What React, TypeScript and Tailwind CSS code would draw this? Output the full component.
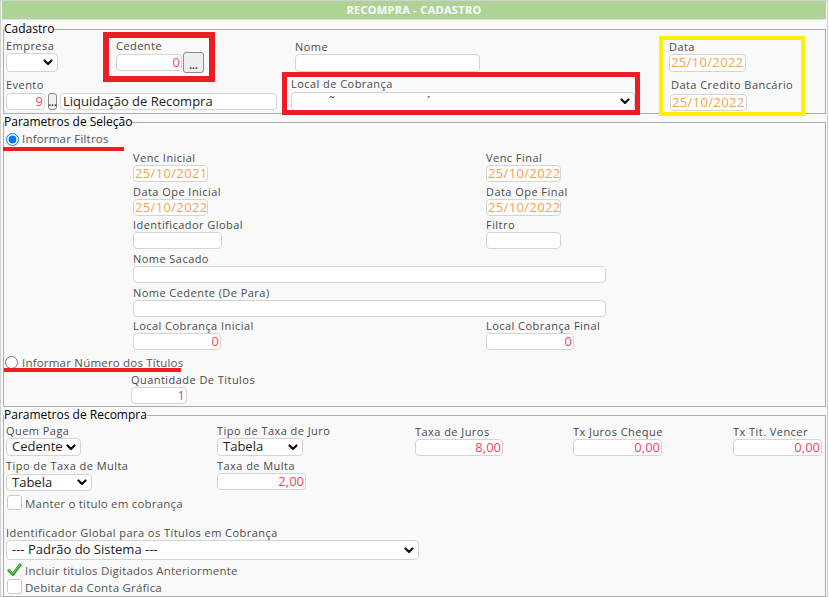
import React from "react";

function Label({ children, className = "" }: { children: React.ReactNode; className?: string }) {
  return (
    <div className={`text-[11px] leading-[15px] tracking-[0.45px] text-[#4a4a4a] whitespace-nowrap ${className}`}>{children}</div>
  );
}

function TextBox({ children, className = "" }: { children?: React.ReactNode; className?: string }) {
  return (
    <div
      className={`rounded-[4px] border border-[#d4d4d4] bg-white text-[13px] leading-[15px] px-[1px] overflow-hidden whitespace-nowrap ${className}`}
    >
      {children}
    </div>
  );
}

function DateBox({ value, className = "" }: { value: string; className?: string }) {
  return <TextBox className={`tracking-[0.35px] text-[#f5a14d] ${className}`}>{value}</TextBox>;
}

function NumBox({ value, className = "" }: { value: string; className?: string }) {
  return <TextBox className={`text-right text-[#f0455f] ${className}`}>{value}</TextBox>;
}

function Chevron() {
  return (
    <svg width="10" height="7" viewBox="0 0 10 7" className="shrink-0">
      <polyline points="1.5,1.5 5,5 8.5,1.5" fill="none" stroke="#111" strokeWidth="2.2" strokeLinecap="round" strokeLinejoin="round" />
    </svg>
  );
}

function Select({ children, className = "" }: { children?: React.ReactNode; className?: string }) {
  return (
    <div
      className={`flex items-center justify-between rounded-[4px] border border-[#d4d4d4] bg-white pl-[5px] pr-[4px] text-[13px] text-[#222] whitespace-nowrap ${className}`}
    >
      <span className="overflow-hidden">{children}</span>
      <Chevron />
    </div>
  );
}

function Dots({ className = "" }: { className?: string }) {
  return (
    <div
      className={`flex items-end justify-center rounded-[3px] border border-[#8c8c8c] bg-[#efefef] text-[10px] leading-[14px] font-bold text-[#333] ${className}`}
    >
      ...
    </div>
  );
}

function CheckBox() {
  return <div className="w-[15px] h-[15px] rounded-[3px] border border-[#c9c9c9] bg-white shrink-0" />;
}

function GreenTick() {
  return (
    <svg width="15" height="14" viewBox="0 0 15 14" className="shrink-0">
      <path d="M2 7.5 L5.8 11.5 L13 2" fill="none" stroke="#3d9b35" strokeWidth="3" strokeLinecap="round" strokeLinejoin="round" />
      <path d="M2.6 7.6 L5.8 10.6 L12.4 2.4" fill="none" stroke="#7ccf68" strokeWidth="1" strokeLinecap="round" />
    </svg>
  );
}

const optText = "text-[11.5px] tracking-[0.2px] text-[#555]";

export default function App() {
  return (
    <div className="w-[829px] h-[597px] overflow-hidden bg-white font-['Open_Sans',sans-serif]">
      <div className="w-[828px] h-[597px] border border-[#d0d0d0] bg-[#f9f9f9]">
        <div className="mx-[1px] h-[19px] border-b border-[#dde2f2] bg-[#afd395] flex items-center justify-center text-[11px] tracking-[0.3px] font-bold text-white">
          RECOMPRA - CADASTRO
        </div>

        {/* Cadastro */}
        <fieldset className="ml-[2px] mr-[1px] mt-[1px] h-[93px] border border-[#acacac]">
          <legend className="text-[12px] leading-[16px] text-black">Cadastro</legend>
          <div className="flex">
            <div className="w-[655px]">
              <div className="flex items-start h-[39px]">
                <div className="ml-[2px] w-[53px]">
                  <Label className="mt-[1px]">Empresa</Label>
                  <Select className="w-[52px] h-[19px]" />
                </div>
                <div className="relative ml-[57px] w-[88px]">
                  <Label className="mt-[1px]">Cedente</Label>
                  <div className="flex items-start">
                    <NumBox value="0" className="w-[66px] h-[17px] mt-[1px]" />
                    <Dots className="ml-[1px] -mt-[1px] w-[21px] h-[21px]" />
                  </div>
                  <div className="absolute left-[-13px] top-[-5px] w-[112px] h-[50px] border-[6px] border-[#ee1d23]" />
                </div>
                <div className="ml-[91px]">
                  <Label className="mt-[2px]">Nome</Label>
                  <TextBox className="w-[185px] h-[18px]" />
                </div>
              </div>
              <div className="flex items-start">
                <div className="ml-[2px] w-[271px]">
                  <Label className="mt-[1px]">Evento</Label>
                  <div className="flex mt-[1px] h-[17px]">
                    <NumBox value="9" className="w-[39px] h-[17px]" />
                    <Dots className="ml-[3px] w-[9px] h-[17px]" />
                    <TextBox className="ml-[3px] w-[217px] h-[17px] text-[#222] pl-[2px]">Liquidação de Recompra</TextBox>
                  </div>
                </div>
                <div className="relative ml-[14px]">
                  <Label>Local de Cobrança</Label>
                  <Select className="mt-[1px] w-[344px] h-[19px] text-[#444]">
                    <span className="ml-[32px] leading-[10px]">˜</span>
                    <span className="ml-[92px] leading-[10px]">´</span>
                  </Select>
                  <div className="absolute left-[-9px] top-[-4px] w-[358px] h-[43px] border-[5px] border-[#ee1d23]" />
                </div>
              </div>
            </div>
            <div className="relative ml-[10px]">
              <Label className="mt-[2px]">Data</Label>
              <DateBox value="25/10/2022" className="w-[77px] h-[18px]" />
              <Label className="mt-[5px] ml-[2px]">Data Credito Bancário</Label>
              <DateBox value="25/10/2022" className="mt-[2px] ml-[1px] w-[77px] h-[17px]" />
              <div className="absolute left-[-10px] top-[-1px] w-[146px] h-[80px] border-[4px] border-[#fff000]" />
            </div>
          </div>
        </fieldset>

        {/* Parametros de Seleção */}
        <fieldset className="ml-[2px] mr-[1px] h-[293px] border border-[#acacac]">
          <legend className="text-[12px] leading-[16px] text-black">Parametros de Seleção</legend>
          <div className="relative flex items-center h-[16px] mt-[1px]">
            <input type="radio" checked readOnly className="ml-[2px] w-[13px] h-[13px]" />
            <span className={`ml-[3px] ${optText}`}>Informar Filtros</span>
            <div className="absolute left-[-1px] top-[16px] w-[121px] h-[4px] bg-[#ee1d23]" />
          </div>
          <div className="ml-[129px] mt-[3px] flex flex-col gap-[1.7px]">
            <div className="flex">
              <div className="w-[353px]">
                <Label>Venc Inicial</Label>
                <DateBox value="25/10/2021" className="w-[75px] h-[17px]" />
              </div>
              <div>
                <Label>Venc Final</Label>
                <DateBox value="25/10/2022" className="w-[75px] h-[17px]" />
              </div>
            </div>
            <div className="flex">
              <div className="w-[353px]">
                <Label>Data Ope Inicial</Label>
                <DateBox value="25/10/2022" className="w-[75px] h-[17px]" />
              </div>
              <div>
                <Label>Data Ope Final</Label>
                <DateBox value="25/10/2022" className="w-[75px] h-[17px]" />
              </div>
            </div>
            <div className="flex">
              <div className="w-[353px]">
                <Label>Identificador Global</Label>
                <TextBox className="w-[89px] h-[17px]" />
              </div>
              <div>
                <Label>Filtro</Label>
                <TextBox className="w-[75px] h-[17px]" />
              </div>
            </div>
            <div>
              <Label>Nome Sacado</Label>
              <TextBox className="w-[473px] h-[17px]" />
            </div>
            <div>
              <Label>Nome Cedente (De Para)</Label>
              <TextBox className="w-[473px] h-[17px]" />
            </div>
            <div className="flex">
              <div className="w-[353px]">
                <Label>Local Cobrança Inicial</Label>
                <NumBox value="0" className="w-[88px] h-[17px]" />
              </div>
              <div>
                <Label>Local Cobrança Final</Label>
                <NumBox value="0" className="w-[88px] h-[17px]" />
              </div>
            </div>
          </div>
          <div className="relative flex items-center h-[16px] mt-[4px]">
            <input type="radio" readOnly className="ml-[1px] w-[13px] h-[13px]" />
            <span className={`ml-[4px] ${optText}`}>Informar Número dos Títulos</span>
            <div className="absolute left-0 top-[14px] w-[177px] h-[4px] bg-[#ee1d23]" />
          </div>
          <div className="ml-[127px] mt-[2px]">
            <Label>Quantidade De Titulos</Label>
            <NumBox value="1" className="w-[56px] h-[17px]" />
          </div>
        </fieldset>

        {/* Parametros de Recompra */}
        <fieldset className="ml-[2px] mr-[1px] h-[190px] border border-[#acacac]">
          <legend className="text-[12px] leading-[16px] text-black">Parametros de Recompra</legend>
          <div className="flex items-start">
            <div className="ml-[2px] w-[211px]">
              <Label>Quem Paga</Label>
              <Select className="w-[75px] h-[18px]">Cedente</Select>
            </div>
            <div className="w-[198px]">
              <Label>Tipo de Taxa de Juro</Label>
              <Select className="w-[86px] h-[18px]">Tabela</Select>
            </div>
            <div className="w-[158px]">
              <Label className="mt-[1px]">Taxa de Juros</Label>
              <NumBox value="8,00" className="w-[88px] h-[17px]" />
            </div>
            <div className="w-[160px]">
              <Label className="mt-[1px]">Tx Juros Cheque</Label>
              <NumBox value="0,00" className="w-[89px] h-[17px]" />
            </div>
            <div>
              <Label className="mt-[1px]">Tx Tit. Vencer</Label>
              <NumBox value="0,00" className="w-[89px] h-[17px]" />
            </div>
          </div>
          <div className="flex items-start mt-[2px]">
            <div className="ml-[2px] w-[211px]">
              <Label>Tipo de Taxa de Multa</Label>
              <Select className="mt-[1px] w-[86px] h-[17px]">Tabela</Select>
            </div>
            <div>
              <Label>Taxa de Multa</Label>
              <NumBox value="2,00" className="w-[89px] h-[17px]" />
            </div>
          </div>
          <div className="flex items-center mt-[4px] ml-[3px] h-[15px]">
            <CheckBox />
            <span className={`ml-[3px] mt-[2px] ${optText}`}>Manter o titulo em cobrança</span>
          </div>
          <div className="ml-[2px] mt-[15px]">
            <Label>Identificador Global para os Títulos em Cobrança</Label>
            <Select className="w-[413px] h-[20px]">--- Padrão do Sistema ---</Select>
          </div>
          <div className="flex items-center mt-[3px] ml-[3px] h-[14px]">
            <GreenTick />
            <span className={`ml-[3px] mt-[2px] ${optText}`}>Incluir titulos Digitados Anteriormente</span>
          </div>
          <div className="flex items-center mt-[2px] ml-[3px] h-[15px]">
            <CheckBox />
            <span className={`ml-[3px] mt-[2px] ${optText}`}>Debitar da Conta Gráfica</span>
          </div>
        </fieldset>
      </div>
    </div>
  );
}
